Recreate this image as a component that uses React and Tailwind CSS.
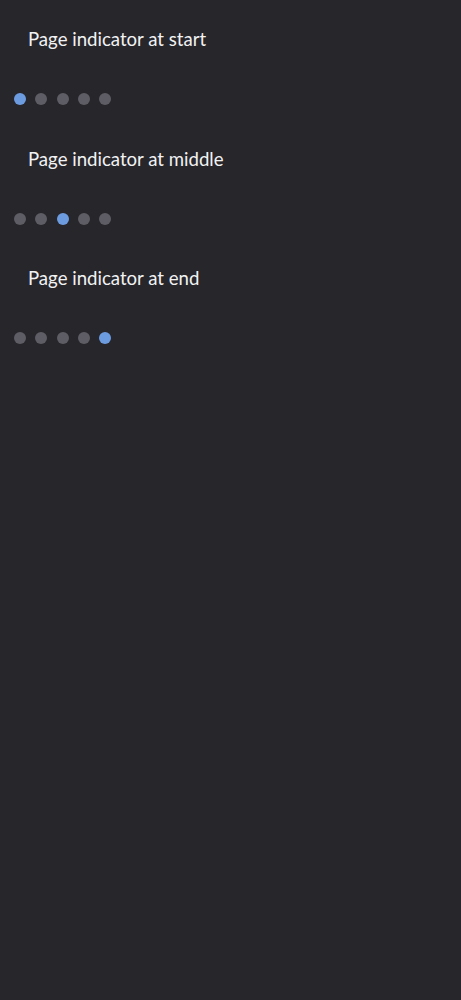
import React from 'react';

const Indicator = ({ active, count = 5 }) => (
    <div className="flex items-center gap-[9.25px] pl-[14px]">
        {Array.from({ length: count }).map((_, i) => (
            <span
                key={i}
                className={i === active ? "w-3 h-3 rounded-full bg-[#6d9be0]" : "w-3 h-3 rounded-full bg-[#5e5d65]"}
            />
        ))}
    </div>
);

const App = () => {
    const rows = [
        { label: "Page indicator at start", active: 0 },
        { label: "Page indicator at middle", active: 2 },
        { label: "Page indicator at end", active: 4 },
    ];

    return (
        <div className="min-h-screen w-full bg-[#27262b] pt-[27px]" style={{ fontFamily: 'Lato, "Open Sans", sans-serif' }}>
            {rows.map((r, i) => (
                <div key={i} className="mb-[41.5px]">
                    <div className="pl-[28px] h-6 leading-6 text-[18.6px] text-[#f2f2f3] mb-[42px]">{r.label}</div>
                    <Indicator active={r.active} />
                </div>
            ))}
        </div>
    );
};

export default App;
